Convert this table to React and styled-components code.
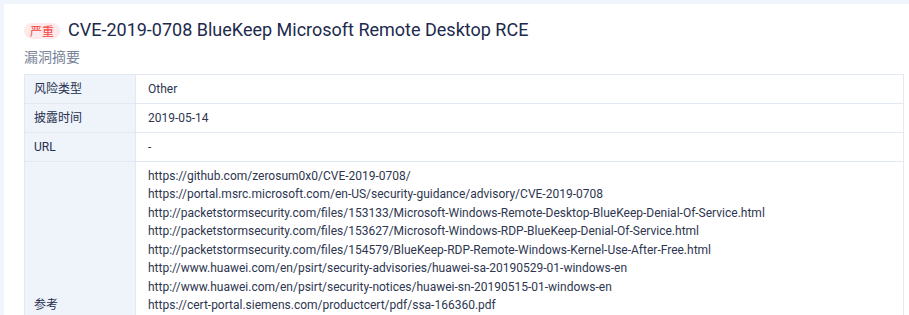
import React from "react";
import styled, { createGlobalStyle } from "styled-components";

const Global = createGlobalStyle`
  html, body { margin: 0; padding: 0; background: #f0f4fb; overflow: hidden; }
  body { font-family: Roboto, "Noto Sans CJK SC", sans-serif; }
  * { box-sizing: border-box; }
`;

const Card = styled.div`
  margin: 4px 0 0 4px;
  background: #fff;
  padding: 14px 5px 0 20px;
  min-height: 400px;
`;

const Header = styled.div`
  display: flex;
  align-items: center;
  gap: 8px;
  height: 24px;
`;

const Badge = styled.span`
  display: inline-flex;
  align-items: center;
  justify-content: center;
  height: 16px;
  padding: 0 6px;
  border-radius: 8px;
  background: #feeaea;
  color: #f5433f;
  font-size: 12px;
  font-family: "Noto Sans CJK SC", sans-serif;
  margin-top: 1px;
`;

const Title = styled.h1`
  margin: 0;
  font-size: 18px;
  line-height: 24px;
  font-weight: 400;
  color: #1d2a4d;
`;

const Subtitle = styled.div`
  margin-top: 4px;
  font-size: 14px;
  line-height: 20px;
  color: #7b8599;
  font-family: "Noto Sans CJK SC", sans-serif;
`;

const Table = styled.table`
  margin-top: 8px;
  width: 880px;
  border-collapse: collapse;
  font-size: 12px;
  line-height: 18px;
`;

const Label = styled.td`
  width: 111px;
  background: #eff3fa;
  border: 1px solid #e3e9f3;
  padding: 5px 9px;
  color: #26304e;
  vertical-align: middle;
  font-family: Roboto, "Noto Sans CJK SC", sans-serif;
`;

const Value = styled.td`
  border: 1px solid #e3e9f3;
  padding: 5px 12px;
  color: #2e3650;
  vertical-align: top;
`;

const RefLine = styled.div`
  white-space: nowrap;
  line-height: 18.45px;
`;

const refs = [
  "https://github.com/zerosum0x0/CVE-2019-0708/",
  "https://portal.msrc.microsoft.com/en-US/security-guidance/advisory/CVE-2019-0708",
  "http://packetstormsecurity.com/files/153133/Microsoft-Windows-Remote-Desktop-BlueKeep-Denial-Of-Service.html",
  "http://packetstormsecurity.com/files/153627/Microsoft-Windows-RDP-BlueKeep-Denial-Of-Service.html",
  "http://packetstormsecurity.com/files/154579/BlueKeep-RDP-Remote-Windows-Kernel-Use-After-Free.html",
  "http://www.huawei.com/en/psirt/security-advisories/huawei-sa-20190529-01-windows-en",
  "http://www.huawei.com/en/psirt/security-notices/huawei-sn-20190515-01-windows-en",
  "https://cert-portal.siemens.com/productcert/pdf/ssa-166360.pdf",
  "https://cert-portal.siemens.com/productcert/pdf/ssa-406175.pdf",
  "https://cert-portal.siemens.com/productcert/pdf/ssa-433987.pdf",
  "https://cert-portal.siemens.com/productcert/pdf/ssa-616199.pdf",
  "https://cert-portal.siemens.com/productcert/pdf/ssa-932041.pdf",
  "http://packetstormsecurity.com/files/155389/Microsoft-Windows-7-x86-BlueKeep-RDP-Use-After-Free.html",
  "http://packetstormsecurity.com/files/162960/Microsoft-RDP-Remote-Code-Execution.html",
  "https://www.cisa.gov/uscert/ncas/alerts/AA19-168A",
];

export default function App() {
  return (
    <>
      <Global />
      <Card>
        <Header>
          <Badge>严重</Badge>
          <Title>CVE-2019-0708 BlueKeep Microsoft Remote Desktop RCE</Title>
        </Header>
        <Subtitle>漏洞摘要</Subtitle>
        <Table>
          <tbody>
            <tr>
              <Label>风险类型</Label>
              <Value>Other</Value>
            </tr>
            <tr>
              <Label>披露时间</Label>
              <Value>2019-05-14</Value>
            </tr>
            <tr>
              <Label>URL</Label>
              <Value>-</Value>
            </tr>
            <tr>
              <Label>参考</Label>
              <Value>
                {refs.map((r) => (
                  <RefLine key={r}>{r}</RefLine>
                ))}
              </Value>
            </tr>
          </tbody>
        </Table>
      </Card>
    </>
  );
}
